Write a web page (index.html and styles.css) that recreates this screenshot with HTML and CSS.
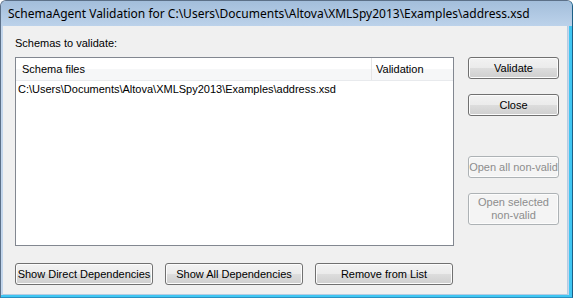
FILE: index.html
```
<!DOCTYPE html>
<html lang="en">
<head>
    <meta charset="UTF-8">
    <meta name="viewport" content="width=device-width, initial-scale=1.0">
    <title>SchemaAgent Validation</title>
    <link rel="stylesheet" href="styles.css">
</head>
<body>
    <div id="window">
        <div id="titlebar">SchemaAgent Validation for C:\Users\Documents\Altova\XMLSpy2013\Examples\address.xsd</div>
        <div id="client">
            <div id="left">
                <div class="label">Schemas to validate:</div>
                <div id="list">
                    <div class="list-head">
                        <div class="col-file">Schema files</div>
                        <div class="col-valid">Validation</div>
                    </div>
                    <div class="list-row">
                        <div class="col-file">C:\Users\Documents\Altova\XMLSpy2013\Examples\address.xsd</div>
                        <div class="col-valid"></div>
                    </div>
                </div>
                <div id="bottom">
                    <button class="btn wide">Show Direct Dependencies</button>
                    <button class="btn wide">Show All Dependencies</button>
                    <button class="btn wide">Remove from List</button>
                </div>
            </div>
            <div id="right">
                <button class="btn side">Validate</button>
                <button class="btn side gap-small">Close</button>
                <button class="btn side gap-big" disabled>Open all non-valid</button>
                <button class="btn side tall gap-small" disabled>Open selected<br>non-valid</button>
            </div>
        </div>
    </div>
</body>
</html>
```
FILE: styles.css
```
body{
    margin: 0;
    background: #ffffff;
    font-family: "Liberation Sans", Arial, sans-serif;
    font-size: 11px;
    color: #000000;
}

#window{
    width: 573px;
    height: 298px;
    box-sizing: border-box;
    border-left: 1px solid #5c7088;
    border-top: 1px solid #5c7088;
    border-right: 1px solid #1d5f86;
    border-bottom: 1px solid #2a8fc0;
    border-radius: 6px 6px 0 0;
    background: #c3d6ec;
    padding: 0 4px 2px 2px;
    display: flex;
    flex-direction: column;
    box-shadow: inset -3px -2px 0 #3fc6f2;
}

#titlebar{
    height: 25px;
    flex-shrink: 0;
    margin: 0 -4px 0 -2px;
    padding-left: 7px;
    box-sizing: border-box;
    line-height: 25px;
    font-family: "Noto Sans", sans-serif;
    font-size: 12px;
    background: linear-gradient(#a3bedb, #bcd2ea);
    border-radius: 5px 5px 0 0;
    white-space: nowrap;
    overflow: hidden;
}

#client{
    flex: 1;
    background: #f0f0f0;
    display: flex;
    padding: 0 0 0 12px;
    border-right: 1px solid #b5cbe2;
    border-bottom: 1px solid #b5cbe2;
}

#left{
    width: 439px;
}

.label{
    height: 31px;
    padding-top: 11px;
    box-sizing: border-box;
    line-height: 13px;
}

#list{
    height: 189px;
    box-sizing: border-box;
    border: 1px solid #828790;
    background: #ffffff;
}

.list-head{
    display: flex;
    height: 22px;
    line-height: 22px;
    background: linear-gradient(#ffffff 50%, #f6f7f8 50%);
    border-bottom: 1px solid #e8eaed;
}

.list-row{
    display: flex;
    height: 16px;
    line-height: 16px;
}

.col-file{
    width: 356px;
    box-sizing: border-box;
    white-space: nowrap;
}

.list-row .col-file{
    padding-left: 2px;
}

.list-head .col-file{
    border-right: 1px solid #e5e5e5;
    padding-left: 6px;
}

.col-valid{
    padding-left: 4px;
}

#bottom{
    display: flex;
    gap: 12px;
    margin-top: 17px;
}

.btn{
    font-family: "Liberation Sans", Arial, sans-serif;
    font-size: 11px;
    color: #000000;
    border: 1px solid #707070;
    border-radius: 3px;
    background: linear-gradient(#f2f2f2 0%, #ebebeb 50%, #dddddd 50%, #cfcfcf 100%);
    box-shadow: inset 0 0 0 1px #fcfcfc;
    padding: 0;
    height: 22px;
    line-height: 13px;
}

.btn:disabled{
    color: #8d8d8d;
    border-color: #adb2b5;
    background: #f4f4f4;
}

.wide{
    width: 138px;
}

#right{
    width: 91px;
    margin-left: 14px;
    padding-top: 31px;
    display: flex;
    flex-direction: column;
}

.side{
    width: 91px;
}

.gap-small{
    margin-top: 15px;
}

.gap-big{
    margin-top: 40px;
}

.tall{
    height: 32px;
}
```
